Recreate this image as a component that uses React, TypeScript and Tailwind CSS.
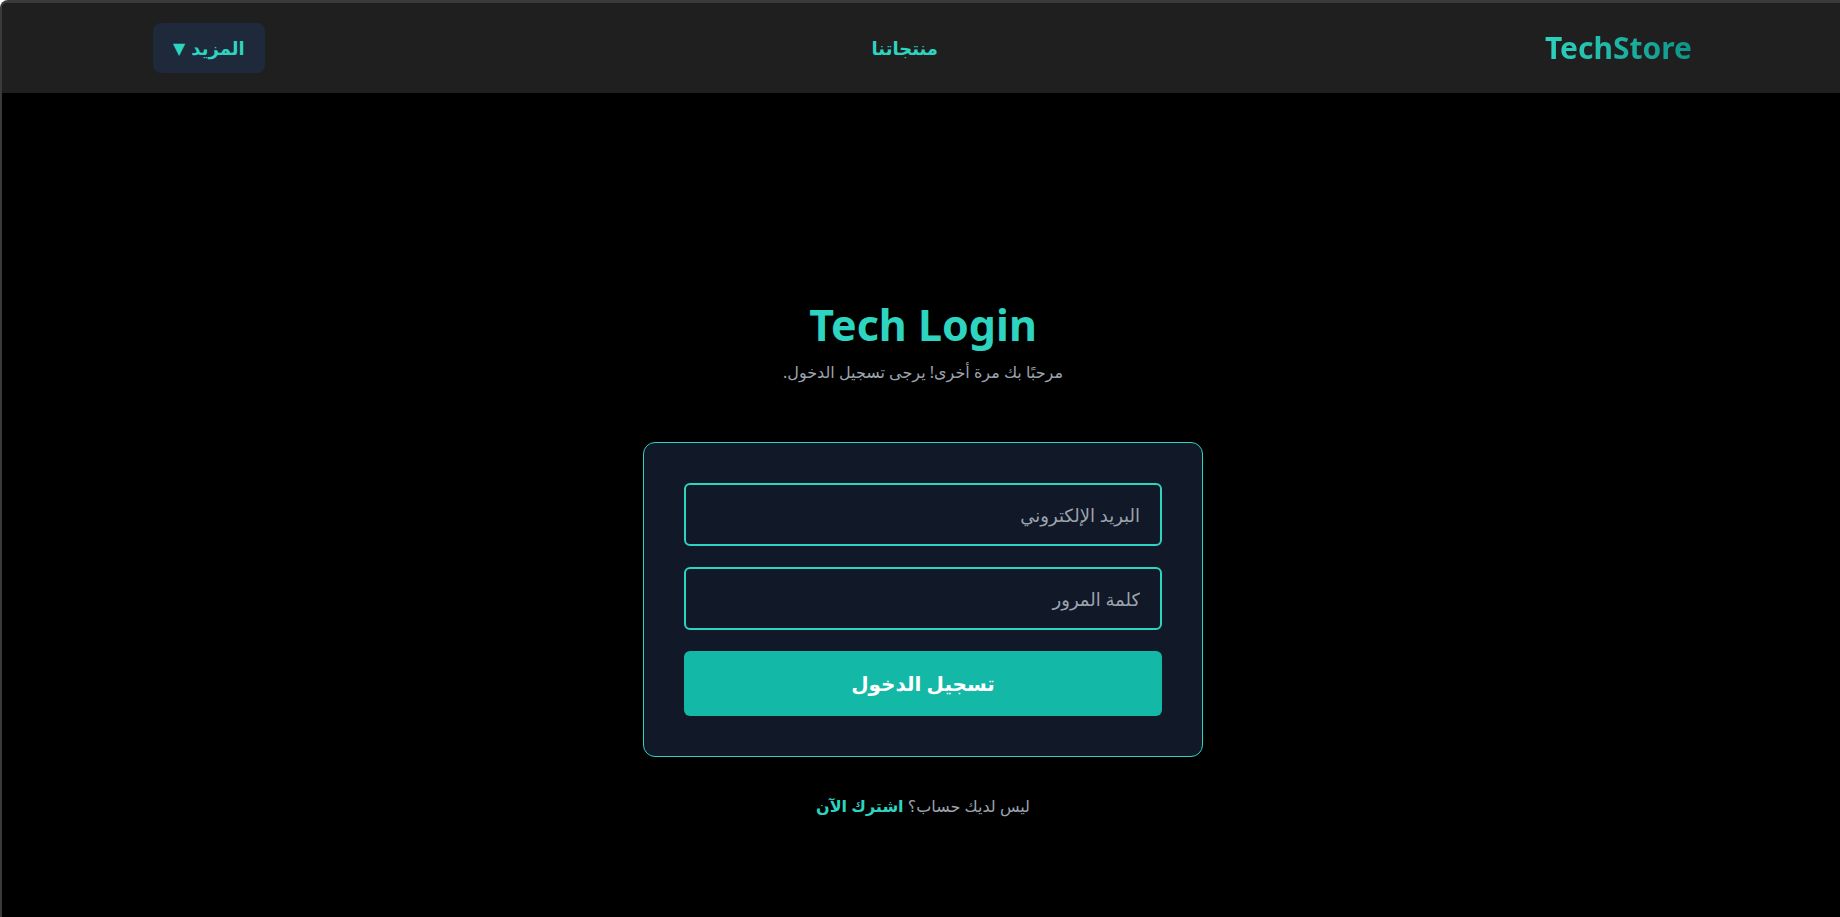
import { useState } from 'react';

const App = () => {
  const [email, setEmail] = useState<string>('');
  const [password, setPassword] = useState<string>('');

  return (
    <div
      dir="rtl"
      className="min-h-screen bg-black border-t-[3px] border-l-2 border-[#3a3a3a] rounded-tl-lg overflow-hidden font-['Noto_Sans','DejaVu_Sans',sans-serif]"
    >
      {/* Navbar */}
      <header className="h-[90px] bg-[#1f1f1f] flex items-center justify-between pr-[148px] pl-[151px]">
        <a className="text-[30px] font-bold leading-none bg-gradient-to-l from-[#0d9488] to-[#2dd4bf] bg-clip-text text-transparent">
          TechStore
        </a>
        <a className="text-lg font-semibold text-[#2dd4bf]">منتجاتنا</a>
        <button className="h-[50px] px-5 rounded-lg bg-[#1e293b] text-[#2dd4bf] text-lg font-semibold flex items-center gap-1.5">
          <span>المزيد</span>
          <span className="text-base">▼</span>
        </button>
      </header>

      {/* Login */}
      <main className="flex flex-col items-center pt-[210px] pl-[4px]">
        <h1 className="text-[43px] leading-none font-bold text-[#2dd4bf]" dir="ltr">
          Tech Login
        </h1>
        <p className="mt-[14px] text-base leading-6 text-[#9ca3af]">
          مرحبًا بك مرة أخرى! يرجى تسجيل الدخول.
        </p>

        <form
          className="mt-[58px] w-[560px] p-10 bg-[#111827] border border-[#2dd4bf] rounded-xl flex flex-col gap-[21px]"
          onSubmit={(e) => e.preventDefault()}
        >
          <input
            type="email"
            value={email}
            onChange={(e) => setEmail(e.target.value)}
            placeholder="البريد الإلكتروني"
            className="h-[63px] px-5 bg-transparent border-2 border-[#2dd4bf] rounded-md text-lg text-gray-200 placeholder:text-[#9ca3af] outline-none"
          />
          <input
            type="password"
            value={password}
            onChange={(e) => setPassword(e.target.value)}
            placeholder="كلمة المرور"
            className="h-[63px] px-5 bg-transparent border-2 border-[#2dd4bf] rounded-md text-lg text-gray-200 placeholder:text-[#9ca3af] outline-none"
          />
          <button
            type="submit"
            className="h-[65px] rounded-md bg-[#14b8a6] text-white text-xl font-bold"
          >
            تسجيل الدخول
          </button>
        </form>

        <p className="mt-[37px] text-base leading-6 text-[#9ca3af]">
          ليس لديك حساب؟ <a className="text-[#2dd4bf] font-bold">اشترك الآن</a>
        </p>
      </main>
    </div>
  );
};

export default App;
